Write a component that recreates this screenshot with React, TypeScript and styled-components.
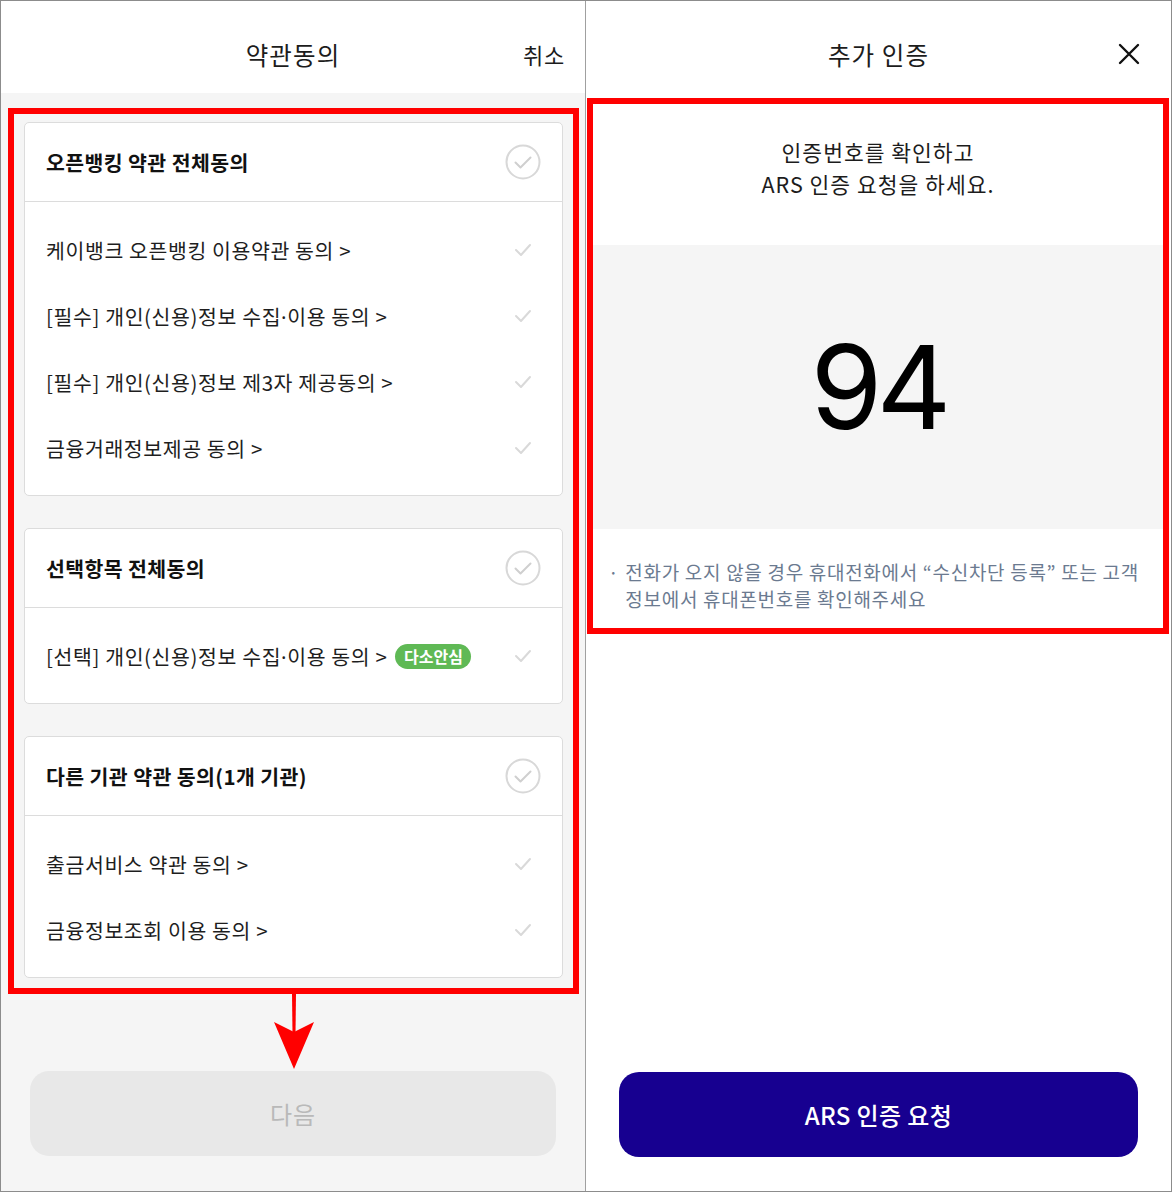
import styled, { createGlobalStyle } from 'styled-components';

const GlobalStyle = createGlobalStyle`
  html, body {
    margin: 0;
    padding: 0;
    background: #ffffff;
  }
  * {
    box-sizing: border-box;
  }
  body {
    font-family: 'Noto Sans CJK KR', 'Noto Sans', sans-serif;
    color: #1c1c1c;
  }
`;

const Frame = styled.div`
  display: flex;
  width: 1172px;
  height: 1192px;
  border: 1px solid #8c8c8c;
  background: #ffffff;
`;

const Panel = styled.section<{ $divider?: boolean }>`
  display: flex;
  flex-direction: column;
  width: ${(p) => (p.$divider ? '585px' : 'auto')};
  flex: ${(p) => (p.$divider ? '0 0 585px' : '1')};
  border-right: ${(p) => (p.$divider ? '1px solid #a0a0a0' : 'none')};
  background: #ffffff;
`;

const Header = styled.header<{ $height: number; $top: number }>`
  display: grid;
  grid-template-columns: 1fr auto 1fr;
  align-items: center;
  height: ${(p) => p.$height}px;
  padding-top: ${(p) => p.$top}px;
  flex-shrink: 0;
`;

const Title = styled.h1`
  grid-column: 2;
  margin: 0;
  font-size: 24.5px;
  font-weight: 400;
  letter-spacing: 1.1px;
  color: #1c1c1c;
`;

const HeaderAction = styled.button`
  grid-column: 3;
  justify-self: end;
  margin-right: 20px;
  padding: 0;
  border: 0;
  background: none;
  font-family: inherit;
  font-size: 22px;
  letter-spacing: 0.8px;
  color: #1c1c1c;
`;

const CloseButton = styled.button`
  grid-column: 3;
  justify-self: end;
  display: flex;
  margin-right: 31px;
  padding: 0;
  border: 0;
  background: none;
`;

const AgreeBody = styled.div`
  display: flex;
  flex-direction: column;
  flex: 1;
  padding: 15px 6px 0 7px;
  background: #f5f5f5;
`;

const Highlight = styled.div`
  border: 6px solid #ff0000;
  padding: 8px 10px 10px;
  display: flex;
  flex-direction: column;
  gap: 32px;
`;

const Card = styled.div`
  background: #ffffff;
  border: 1px solid #dcdcdc;
  border-radius: 5px;
`;

const CardHead = styled.div`
  display: flex;
  align-items: center;
  justify-content: space-between;
  height: 79px;
  padding: 0 21px 0 21px;
  border-bottom: 1px solid #dcdcdc;
`;

const CardTitle = styled.span`
  font-size: 20.5px;
  font-weight: 700;
  letter-spacing: 0.4px;
  color: #111111;
`;

const ItemList = styled.ul`
  list-style: none;
  margin: 0;
  padding: 15px 0 14px;
`;

const Item = styled.li`
  display: flex;
  align-items: center;
  justify-content: space-between;
  height: 66px;
  padding: 0 21px;
`;

const ItemLabel = styled.span`
  display: flex;
  align-items: center;
  gap: 8px;
  font-size: 20.5px;
  letter-spacing: 0.6px;
  color: #1e1e1e;
`;

/* narrow middle dot between 수집 and 이용 */
const Dot = styled.span`
  font-family: 'Noto Sans', sans-serif;
  letter-spacing: 0.6px;
`;

const Badge = styled.span`
  display: inline-flex;
  align-items: center;
  justify-content: center;
  width: 76px;
  height: 25px;
  border-radius: 13px;
  background: #5fb955;
  color: #ffffff;
  font-size: 16px;
  font-weight: 700;
  letter-spacing: 0;
`;

const CheckSlot = styled.span`
  display: flex;
  justify-content: center;
  align-items: center;
  width: 36px;
  height: 36px;
`;

const ArrowMark = styled.svg`
  display: block;
  margin: 0 auto;
  flex-shrink: 0;
`;

const WideButton = styled.button<{ $primary?: boolean }>`
  display: flex;
  align-items: center;
  justify-content: center;
  height: 85px;
  border: 0;
  border-radius: ${(p) => (p.$primary ? '20px' : '19px')};
  background: ${(p) => (p.$primary ? '#170090' : '#e8e8e8')};
  color: ${(p) => (p.$primary ? '#ffffff' : '#b9b9b9')};
  font-family: inherit;
  font-size: 24px;
  font-weight: ${(p) => (p.$primary ? 500 : 400)};
  letter-spacing: ${(p) => (p.$primary ? '0.4px' : '1px')};
  flex-shrink: 0;
`;

const NextButton = styled(WideButton)`
  margin: 0 23px 0 22px;
`;

const RequestButton = styled(WideButton)`
  margin: auto 33px 34px 33px;
`;

const ArsBox = styled.div`
  margin: 0 2px 0 1px;
  border: 6px solid #ff0000;
  display: flex;
  flex-direction: column;
`;

const Guide = styled.p`
  margin: 0;
  padding: 32px 0 45px;
  text-align: center;
  font-size: 21.5px;
  line-height: 32px;
  letter-spacing: 1px;
  color: #1c1c1c;
`;

const CodeArea = styled.div`
  display: flex;
  align-items: center;
  justify-content: center;
  height: 284px;
  background: #f5f5f5;
`;

const Code = styled.span`
  font-family: Inter, Roboto, sans-serif;
  font-size: 116px;
  font-weight: 400;
  letter-spacing: -6px;
  line-height: 1;
  color: #000000;
`;

const Notice = styled.div`
  display: flex;
  gap: 6px;
  padding: 29px 16px 16px 15px;
  font-size: 19px;
  line-height: 27px;
  letter-spacing: 0.7px;
  word-break: keep-all;
  color: #6b7a90;
`;

const Bullet = styled.span`
  flex-shrink: 0;
`;

const CircleCheck = () => (
  <CheckSlot>
    <svg width='36' height='36' viewBox='0 0 36 36' fill='none'>
      <circle cx='18' cy='18' r='16.5' stroke='#d8d8d8' strokeWidth='2' />
      <path d='M10.5 18.5l5 5 10-10' stroke='#cfcfcf' strokeWidth='2' strokeLinecap='round' strokeLinejoin='round' />
    </svg>
  </CheckSlot>
);

const SmallCheck = () => (
  <CheckSlot>
    <svg width='20' height='14' viewBox='0 0 20 14' fill='none'>
      <path d='M3 7l5 5 9-10' stroke='#d9d9d9' strokeWidth='2' strokeLinecap='round' strokeLinejoin='round' />
    </svg>
  </CheckSlot>
);

const Label = ({ text }: { text: string }) => {
  const parts = text.split('·');
  return (
    <span>
      {parts.map((part, i) => (
        <span key={i}>
          {i > 0 && <Dot>·</Dot>}
          {part}
        </span>
      ))}
    </span>
  );
};

type Group = {
  title: string;
  items: { label: string; badge?: string }[];
};

const groups: Group[] = [
  {
    title: '오픈뱅킹 약관 전체동의',
    items: [
      { label: '케이뱅크 오픈뱅킹 이용약관 동의 >' },
      { label: '[필수] 개인(신용)정보 수집·이용 동의 >' },
      { label: '[필수] 개인(신용)정보 제3자 제공동의 >' },
      { label: '금융거래정보제공 동의 >' },
    ],
  },
  {
    title: '선택항목 전체동의',
    items: [{ label: '[선택] 개인(신용)정보 수집·이용 동의 >', badge: '다소안심' }],
  },
  {
    title: '다른 기관 약관 동의(1개 기관)',
    items: [{ label: '출금서비스 약관 동의 >' }, { label: '금융정보조회 이용 동의 >' }],
  },
];

const App = () => {
  return (
    <>
      <GlobalStyle />
      <Frame>
        <Panel $divider>
          <Header $height={92} $top={14}>
            <Title>약관동의</Title>
            <HeaderAction>취소</HeaderAction>
          </Header>
          <AgreeBody>
            <Highlight>
              {groups.map((group) => (
                <Card key={group.title}>
                  <CardHead>
                    <CardTitle>{group.title}</CardTitle>
                    <CircleCheck />
                  </CardHead>
                  <ItemList>
                    {group.items.map((item) => (
                      <Item key={item.label}>
                        <ItemLabel>
                          <Label text={item.label} />
                          {item.badge && <Badge>{item.badge}</Badge>}
                        </ItemLabel>
                        <SmallCheck />
                      </Item>
                    ))}
                  </ItemList>
                </Card>
              ))}
            </Highlight>
            <ArrowMark width='44' height='77' viewBox='0 0 44 77'>
              <path d='M20 0h4l-0.5 40h-3z' fill='#ff0000' />
              <path d='M2 28l20 47 20-47-20 10z' fill='#ff0000' />
            </ArrowMark>
            <NextButton>다음</NextButton>
            <div style={{ height: 34 }} />
          </AgreeBody>
        </Panel>
        <Panel>
          <Header $height={97} $top={9}>
            <Title>추가 인증</Title>
            <CloseButton aria-label='닫기'>
              <svg width='22' height='22' viewBox='0 0 22 22' fill='none'>
                <path d='M2 2l18 18M20 2L2 20' stroke='#111111' strokeWidth='2.4' strokeLinecap='round' />
              </svg>
            </CloseButton>
          </Header>
          <ArsBox>
            <Guide>
              인증번호를 확인하고
              <br />
              ARS 인증 요청을 하세요.
            </Guide>
            <CodeArea>
              <Code>94</Code>
            </CodeArea>
            <Notice>
              <Bullet>·</Bullet>
              <span>전화가 오지 않을 경우 휴대전화에서 “수신차단 등록” 또는 고객 정보에서 휴대폰번호를 확인해주세요</span>
            </Notice>
          </ArsBox>
          <RequestButton $primary>ARS 인증 요청</RequestButton>
        </Panel>
      </Frame>
    </>
  );
};

export default App;
